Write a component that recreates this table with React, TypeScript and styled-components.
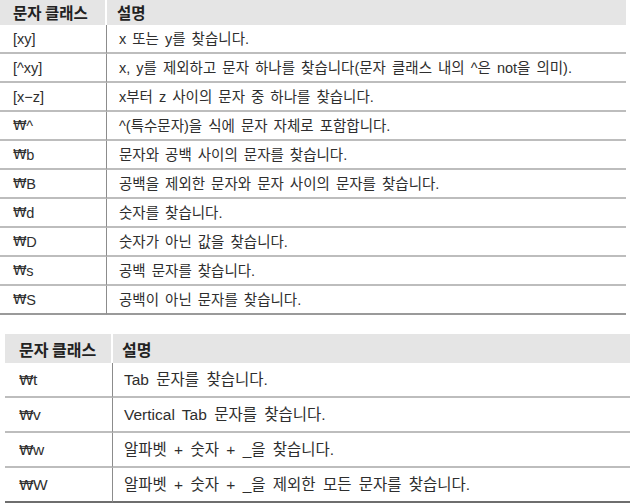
import React from "react";
import styled, { createGlobalStyle } from "styled-components";

const Global = createGlobalStyle`
  html, body { margin: 0; padding: 0; background: #ffffff; }
  body { font-family: "Liberation Sans", "Noto Sans CJK KR", sans-serif; color: #2a2a2a; }
`;

const Page = styled.div`
  width: 636px;
  height: 504px;
  display: flex;
  flex-direction: column;
  gap: 19px;
  overflow: hidden;
`;

type TableProps = {
  $left: number;
  $width: number;
  $col: number;
  $font: number;
  $word: number;
};

const Table = styled.div<TableProps>`
  margin-left: ${(p) => p.$left}px;
  width: ${(p) => p.$width}px;
  display: grid;
  grid-template-columns: ${(p) => p.$col}px 1fr;
  font-size: ${(p) => p.$font}px;
  word-spacing: ${(p) => p.$word}px;
  line-height: 1;
`;

const HeadCell = styled.div<{ $h: number; $pad: number; $first?: boolean }>`
  height: ${(p) => p.$h}px;
  background: #e5e5e5;
  display: flex;
  align-items: center;
  padding-left: ${(p) => p.$pad}px;
  font-family: "Noto Sans CJK KR", sans-serif;
  font-weight: 700;
  word-spacing: 0;
  color: #222;
  border-right: ${(p) => (p.$first ? "2px solid #ffffff" : "none")};
  box-sizing: border-box;
`;

const Cell = styled.div<{ $h: number; $pad: number; $first?: boolean; $last?: boolean; $strong?: boolean }>`
  height: ${(p) => p.$h}px;
  box-sizing: border-box;
  display: flex;
  align-items: center;
  padding-left: ${(p) => p.$pad}px;
  padding-top: 1px;
  white-space: pre;
  border-bottom: ${(p) =>
    p.$last ? (p.$strong ? "2px solid #6e6e6e" : "2px solid #9a9a9a") : "2px solid #bdbdbd"};
  border-right: ${(p) => (p.$first ? "1px solid #8c8c8c" : "none")};
  color: #2e2e2e;
`;

const Won = styled.span`
  font-family: "DejaVu Sans", sans-serif;
  font-size: 0.95em;
  letter-spacing: -0.5px;
`;

const HeadText = styled.span<{ $size: number }>`
  font-size: ${(p) => p.$size}px;
`;

type Row = [string, string];

const rows1: Row[] = [
  ["[xy]", "x 또는 y를 찾습니다."],
  ["[^xy]", "x, y를 제외하고 문자 하나를 찾습니다(문자 클래스 내의 ^은 not을 의미)."],
  ["[x−z]", "x부터 z 사이의 문자 중 하나를 찾습니다."],
  ["₩^", "^(특수문자)을 식에 문자 자체로 포함합니다."],
  ["₩b", "문자와 공백 사이의 문자를 찾습니다."],
  ["₩B", "공백을 제외한 문자와 문자 사이의 문자를 찾습니다."],
  ["₩d", "숫자를 찾습니다."],
  ["₩D", "숫자가 아닌 값을 찾습니다."],
  ["₩s", "공백 문자를 찾습니다."],
  ["₩S", "공백이 아닌 문자를 찾습니다."],
];

const rows2: Row[] = [
  ["₩t", "Tab 문자를 찾습니다."],
  ["₩v", "Vertical Tab 문자를 찾습니다."],
  ["₩w", "알파벳 + 숫자 + _을 찾습니다."],
  ["₩W", "알파벳 + 숫자 + _을 제외한 모든 문자를 찾습니다."],
];

function Code({ text }: { text: string }) {
  if (text.startsWith("₩")) {
    return (
      <>
        <Won>₩</Won>
        {text.slice(1)}
      </>
    );
  }
  return <>{text}</>;
}

type Spec = {
  left: number;
  width: number;
  col: number;
  font: number;
  word: number;
  headFont: number;
  headH: number;
  rowH: number;
  pad1: number;
  pad2: number;
  strong?: boolean;
  rows: Row[];
};

function ClassTable({ left, width, col, font, word, headFont, headH, rowH, pad1, pad2, strong, rows }: Spec) {
  return (
    <Table $left={left} $width={width} $col={col} $font={font} $word={word}>
      <HeadCell $h={headH} $pad={pad1} $first>
        <HeadText $size={headFont}>문자 클래스</HeadText>
      </HeadCell>
      <HeadCell $h={headH} $pad={pad2 - 2}>
        <HeadText $size={headFont}>설명</HeadText>
      </HeadCell>
      {rows.map(([a, b], i) => (
        <React.Fragment key={i}>
          <Cell $h={rowH} $pad={pad1} $first $last={i === rows.length - 1} $strong={strong}>
            <Code text={a} />
          </Cell>
          <Cell $h={rowH} $pad={pad2} $last={i === rows.length - 1} $strong={strong}>
            {b}
          </Cell>
        </React.Fragment>
      ))}
    </Table>
  );
}

export default function App() {
  return (
    <Page>
      <Global />
      <ClassTable
        left={0}
        width={626}
        col={107}
        font={14.5}
        word={2}
        headFont={15.5}
        headH={25}
        rowH={29}
        pad1={13}
        pad2={12}
        rows={rows1}
      />
      <ClassTable
        left={5}
        width={625}
        col={108}
        font={15.5}
        word={3}
        headFont={16}
        headH={29}
        rowH={35}
        pad1={14}
        pad2={11}
        strong
        rows={rows2}
      />
    </Page>
  );
}
